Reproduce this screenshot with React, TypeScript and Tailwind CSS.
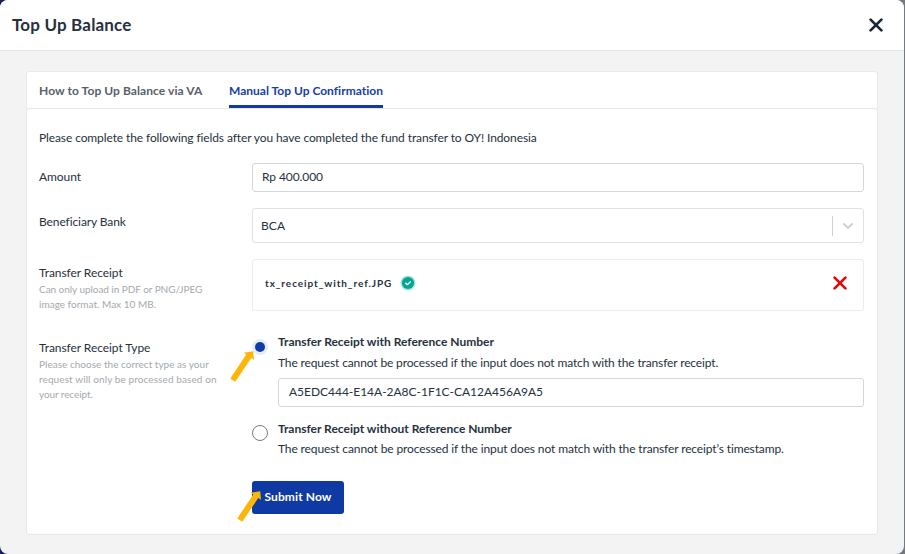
import React from "react";

function Cross({ className }: { className: string }) {
  return (
    <svg viewBox="0 0 14 14" className={className} fill="none" stroke="currentColor" strokeWidth="2.7" strokeLinecap="round">
      <path d="M1.6 1.6 12.4 12.4M12.4 1.6 1.6 12.4" />
    </svg>
  );
}

function Arrow({ className }: { className: string }) {
  return (
    <svg viewBox="0 0 24 31" className={`pointer-events-none absolute h-[31px] w-6 ${className}`} fill="#fdb50a">
      <path d="M23.2 0.3 13.8 1.8 16.2 3.6 0.3 27.4 5.2 30.7 21.3 7 24 8.8Z" />
    </svg>
  );
}

export default function App() {
  return (
    <div className="h-[554px] w-[905px] overflow-hidden bg-linear-to-r from-[#17205c] from-50% to-[#747a80] to-50% font-['Lato',sans-serif] text-[12px] leading-4 text-[#26313d]">
      <div className="flex h-full w-[904px] flex-col overflow-hidden rounded-lg bg-[#f3f3f3]">
        <header className="flex h-[51px] shrink-0 items-center justify-between border-b border-[#e6e6e7] bg-white pr-[21px] pl-3">
          <h1 className="-mt-px text-[17px] leading-6 font-bold tracking-[0.18px]">Top Up Balance</h1>
          <button aria-label="Close" className="-mt-px text-[#1b2836]">
            <Cross className="size-[14px]" />
          </button>
        </header>

        <main className="mt-5 ml-[26px] flex h-[464px] w-[852px] flex-col">
          <nav className="flex h-[37px] shrink-0 gap-[26px] rounded-t-[3px] border border-b-0 border-[#e9eaeb] bg-white pl-3 font-bold">
            <div className="w-[164px] pt-[11px] tracking-[0.08px] whitespace-nowrap text-[#56606b]">How to Top Up Balance via VA</div>
            <div className="h-[36px] w-[154px] border-b-[3px] border-[#123a9f] pt-[11px] tracking-[0.01px] whitespace-nowrap text-[#173da6]">Manual Top Up Confirmation</div>
          </nav>

          <section className="flex grow flex-col rounded-[3px] border border-[#e6e7e9] bg-white pr-[13px] pl-3">
            <p className="mt-[21px] tracking-[-0.108px]">
              Please complete the following fields after you have completed the fund transfer to OY! Indonesia
            </p>

            <div className="mt-[17px] flex h-[29px]">
              <label className="w-[213px] pt-[6px] tracking-[-0.076px]">Amount</label>
              <div className="grow rounded-[3px] border border-[#d3d8dc] px-[9px] pt-[5px] tracking-[-0.092px]">Rp 400.000</div>
            </div>

            <div className="mt-4 flex h-[35px]">
              <label className="w-[213px] pt-[6px] tracking-[-0.098px]">Beneficiary Bank</label>
              <div className="flex grow items-center rounded-[3px] border border-[#e0e2e4] pl-2">
                <span className="grow tracking-[0.051px]">BCA</span>
                <span className="h-5 w-px bg-[#d0d0d0]" />
                <svg viewBox="0 0 12 8" className="mx-[9px] h-2 w-3" fill="none" stroke="#cccccc" strokeWidth="1.8" strokeLinecap="round" strokeLinejoin="round">
                  <path d="M2 2 6 5.8 10 2" />
                </svg>
              </div>
            </div>

            <div className="mt-4 flex h-[52px]">
              <div className="w-[213px] pt-[6px]">
                <div className="tracking-[-0.062px]">Transfer Receipt</div>
                <div className="mt-px text-[10px] leading-[15px] text-[#a4a9ae]">
                  <div className="tracking-[-0.053px]">Can only upload in PDF or PNG/JPEG</div>
                  <div className="tracking-[0.011px]">image format. Max 10 MB.</div>
                </div>
              </div>
              <div className="flex grow items-center rounded-[3px] border border-[#ebeced] pr-[16px] pl-3">
                <span className="-mt-1 text-[10px] font-bold tracking-[0.92px]">tx_receipt_with_ref.JPG</span>
                <svg viewBox="0 0 16 16" className="-mt-1 ml-2 size-4">
                  <circle cx="8" cy="8" r="7.6" fill="#a5e4db" />
                  <circle cx="8" cy="8" r="6.1" fill="#04a691" />
                  <path d="M5.7 8.2 7.3 9.7 10.4 6.7" fill="none" stroke="#fff" strokeWidth="1.2" strokeLinecap="round" strokeLinejoin="round" />
                </svg>
                <button aria-label="Remove file" className="mt-[-5px] ml-auto text-[#e30910]">
                  <Cross className="size-[14px]" />
                </button>
              </div>
            </div>

            <div className="mt-[23px] flex">
              <div className="w-[213px] pt-[6px]">
                <div className="tracking-[-0.065px]">Transfer Receipt Type</div>
                <div className="mt-px text-[10px] leading-[15px] text-[#a4a9ae]">
                  <div className="tracking-[0.022px]">Please choose the correct type as your</div>
                  <div className="tracking-[0.097px]">request will only be processed based on</div>
                  <div className="tracking-[-0.086px]">your receipt.</div>
                </div>
              </div>
              <div className="grow">
                <div className="relative flex">
                  <span className="mt-[5px] mr-[10px] flex size-4 shrink-0 items-center justify-center rounded-full bg-[#e5ecf5]">
                    <span className="size-[10px] rounded-full bg-[#0f3ba8]" />
                  </span>
                  <Arrow className="top-[17px] -left-[22px]" />
                  <div className="grow">
                    <div className="font-bold tracking-[-0.005px]">Transfer Receipt with Reference Number</div>
                    <div className="mt-[5px] tracking-[-0.138px]">The request cannot be processed if the input does not match with the transfer receipt.</div>
                    <div className="mt-[7px] h-[29px] rounded-[3px] border border-[#d3d8dc] px-[10px] pt-[5px] tracking-[-0.025px]">A5EDC444-E14A-2A8C-1F1C-CA12A456A9A5</div>
                  </div>
                </div>
                <div className="mt-[14px] flex">
                  <span className="mt-[4px] mr-[10px] size-4 shrink-0 rounded-full border border-[#777b80] bg-white" />
                  <div>
                    <div className="font-bold tracking-[-0.01px]">Transfer Receipt without Reference Number</div>
                    <div className="mt-[4px] tracking-[-0.125px]">The request cannot be processed if the input does not match with the transfer receipt’s timestamp.</div>
                  </div>
                </div>
                <div className="relative mt-[24px] w-[92px]">
                  <button className="block h-[33px] w-full rounded-[3px] bg-[#0f3aa3] pb-px font-bold tracking-[0.110px] whitespace-nowrap text-white">Submit Now</button>
                  <Arrow className="top-[10px] -left-[15px]" />
                </div>
              </div>
            </div>
          </section>
        </main>
      </div>
    </div>
  );
}
